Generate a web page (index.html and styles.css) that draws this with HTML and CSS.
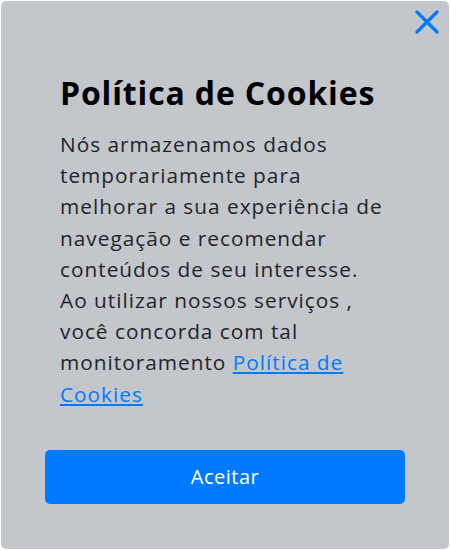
FILE: index.html
```html
<!DOCTYPE html>
<html lang="pt-BR">
<head>
  <meta charset="UTF-8" />
  <meta name="viewport" content="width=device-width, initial-scale=1.0"/>
  <title>Política de Cookies</title>
  <link rel="stylesheet" href="styles.css">
</head>
<body>
  <div class="card">
    <button class="close" aria-label="Fechar">
      <svg width="24" height="24" viewBox="0 0 24 24">
        <path d="M2 2 L22 22 M22 2 L2 22" stroke="#007bff" stroke-width="3.2" stroke-linecap="round" fill="none"/>
      </svg>
    </button>
    <div class="title">Política de Cookies</div>
    <p class="text">
      Nós armazenamos dados temporariamente para melhorar a sua experiência de navegação e recomendar conteúdos de seu interesse. Ao utilizar nossos serviços , você concorda com tal monitoramento <a href="#">Política de Cookies</a>
    </p>
    <button class="accept">Aceitar</button>
  </div>
</body>
</html>
```

FILE: styles.css
```css
* {
  box-sizing: border-box;
}
body {
  margin: 0;
  padding: 1px;
  background: #ffffff;
  font-family: 'Open Sans', 'Lato', sans-serif;
}
.card {
  position: relative;
  height: 548px;
  background: #c3c6ca;
  border-radius: 5px;
  padding: 70px 44px 0 44px;
}
.close {
  position: absolute;
  top: 9px;
  right: 10px;
  padding: 0;
  border: none;
  background: none;
  cursor: pointer;
  line-height: 0;
}
.title {
  font-size: 32px;
  font-weight: 700;
  line-height: 44px;
  letter-spacing: 0.85px;
  color: #000;
  padding: 0 15px;
  margin-bottom: 14px;
}
.text {
  font-size: 20.8px;
  line-height: 31.2px;
  letter-spacing: 1px;
  color: #212529;
  padding: 0 15px;
  margin: 0 0 40px;
}
.text a {
  color: #007bff;
}
.accept {
  display: block;
  width: 100%;
  height: 54px;
  border: none;
  border-radius: 5px;
  background: #007bff;
  color: #fff;
  font-family: inherit;
  font-size: 20px;
  letter-spacing: 0.5px;
  cursor: pointer;
}
```
